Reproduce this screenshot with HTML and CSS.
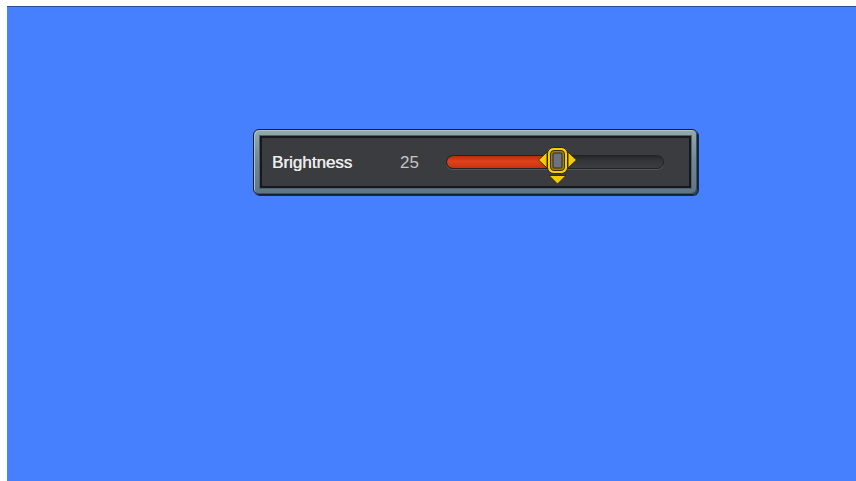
FILE: index.html
```html
<!DOCTYPE html>
<html>
<head>
<meta charset="utf-8">
<link rel="stylesheet" href="styles.css">
</head>
<body>
<div class="stage">
  <div class="panel">
    <div class="inner">
      <span class="label">Brightness</span>
      <span class="value">25</span>
      <div class="slider">
        <div class="track">
          <div class="fill" style="width: 102px"></div>
        </div>
        <div class="thumb" style="left: 91px">
          <svg width="41" height="40" viewBox="0 0 41 40">
            <polygon points="1.5,14 10,6 10,22" fill="#f2cc00" stroke="#3a2e00" stroke-width="1"/>
            <polygon points="39.5,14 31,6 31,22" fill="#f2cc00" stroke="#3a2e00" stroke-width="1"/>
            <polygon points="12,29.5 29,29.5 20.5,38" fill="#f2cc00" stroke="#3a2e00" stroke-width="1"/>
            <rect x="10.5" y="1.5" width="20" height="26" rx="6" fill="#f4cf08" stroke="#2e2400" stroke-width="1"/>
            <rect x="13.5" y="4.5" width="14" height="20" rx="3.5" fill="#9c8200" stroke="#3a3000" stroke-width="1"/>
            <rect x="16" y="7" width="9" height="15" rx="1" fill="#6c7282" stroke="#2a2a2a" stroke-width="1"/>
          </svg>
        </div>
      </div>
    </div>
  </div>
</div>
</body>
</html>
```
FILE: styles.css
```css
html, body {
  margin: 0;
  padding: 0;
  background: #ffffff;
  overflow: hidden;
}
body {
  padding: 6px 0 0 7px;
  font-family: "Liberation Sans", Arial, sans-serif;
}
.stage {
  box-sizing: border-box;
  width: calc(100vw - 7px);
  height: calc(100vh - 6px);
  background: #4680fe;
  border-top: 1px solid #2a4c9a;
  padding: 122px 0 0 246px;
}
.panel {
  box-sizing: border-box;
  width: 445px;
  height: 66px;
  border: 1px solid #10202c;
  border-radius: 6px;
  background: linear-gradient(#94aab2, #728a96 45%, #5e7684);
  box-shadow: inset 1px 1px 0 #b0c2c8, inset -1px -1px 0 #3e5260, 1px 1px 0 #1a2a38;
  padding: 6px;
}
.inner {
  box-sizing: border-box;
  height: 100%;
  border: 2px solid #18181c;
  box-shadow: 0 0 0 1px #4e6270;
  background: #3b3c40;
  display: flex;
  align-items: center;
  padding: 0 0 0 10px;
}
.label {
  color: #ececec;
  font-size: 17px;
  width: 128px;
  padding-top: 2px;
  text-shadow: 0.3px 0 0 #ececec;
}
.value {
  color: #c4c4c4;
  font-size: 17px;
  width: 46px;
  padding-top: 2px;
}
.slider {
  position: relative;
  width: 218px;
  height: 14px;
}
.track {
  box-sizing: border-box;
  height: 14px;
  border-radius: 7px;
  background: linear-gradient(#26272a, #35363a 40%, #3c3d41);
  border: 1px solid #222326;
  box-shadow: 0 1px 0 #55565b;
  overflow: hidden;
}
.fill {
  height: 100%;
  border-radius: 7px 0 0 7px;
  background: linear-gradient(#b82a10, #e0421a 45%, #c83210);
}
.thumb {
  position: absolute;
  top: -9px;
  width: 41px;
  height: 40px;
}
.thumb svg {
  display: block;
}
```
